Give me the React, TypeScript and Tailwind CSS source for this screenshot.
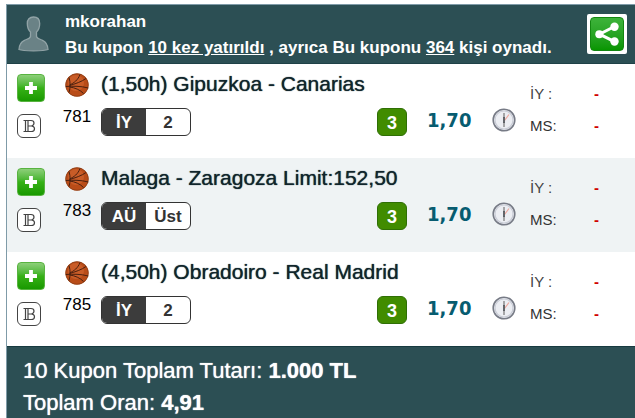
import React from "react";

interface Match {
  code: number;
  title: string;
  market: string;
  pick: string;
  minimum: number;
  odds: string;
}

const matches: Match[] = [
  { code: 781, title: "(1,50h) Gipuzkoa - Canarias", market: "İY", pick: "2", minimum: 3, odds: "1,70" },
  { code: 783, title: "Malaga - Zaragoza Limit:152,50", market: "AÜ", pick: "Üst", minimum: 3, odds: "1,70" },
  { code: 785, title: "(4,50h) Obradoiro - Real Madrid", market: "İY", pick: "2", minimum: 3, odds: "1,70" },
];

const Avatar: React.FC = () => (
  <svg className="w-8 h-9 shrink-0" viewBox="0 0 32 36" aria-hidden="true">
    <path
      d="M16.500 1c-4 0-6.200 2.600-6.200 6.500 0 3.500 1 6.500 3.200 8.500v4.500c-.5 2-3 2.600-6 3.800C4 25.800 2.300 28 2 33.500c4 1.700 25 1.700 29 0-.3-5.500-2.200-7.700-5.500-9.200-3-1.200-5.500-1.800-6-3.800V16c2.200-2 3.200-5 3.200-8.500C22.700 3.600 20.500 1 16.500 1z"
      fill="#6a8286"
      stroke="#91a3a6"
      strokeWidth="1.300"
    />
  </svg>
);

const ShareIcon: React.FC = () => (
  <svg className="w-8 h-8" viewBox="0 0 32 32" aria-hidden="true">
    <path d="M23.500 8.500 8.500 16.200l15 7.500" fill="none" stroke="#fff" strokeWidth="3" />
    <circle cx="23.500" cy="8.700" r="4.200" fill="#fff" />
    <circle cx="8.300" cy="16.200" r="4" fill="#fff" />
    <circle cx="23.500" cy="23.500" r="4.200" fill="#fff" />
  </svg>
);

const Basketball: React.FC = () => (
  <svg className="w-6 h-6" viewBox="0 0 24 24" aria-hidden="true">
    <circle cx="12" cy="12" r="11.500" fill="#b94c18" />
    <circle cx="11" cy="10" r="8" fill="#c95c27" />
    <g fill="none" stroke="#4a200f" strokeWidth="1">
      <circle cx="12" cy="12" r="11.300" stroke="#8a3d17" strokeWidth="0.800" />
      <path d="M0.800 13.500C8 13 16 13 23.300 15" />
      <path d="M4 4.500c1.500 5 1.500 10 0 15" />
      <path d="M4.500 12C9 10 13 7 15 1.500" />
      <path d="M4.500 12.500C10 11 17 8.500 21 5.500" />
      <path d="M4.500 14c5 .5 11 3 14 6.500" />
    </g>
  </svg>
);

const Clock: React.FC = () => (
  <svg className="w-6 h-6" viewBox="0 0 24 24" aria-hidden="true">
    <circle cx="12" cy="12" r="10.800" fill="#eceef3" stroke="#777b86" strokeWidth="1.600" />
    <circle cx="12" cy="12" r="9" fill="none" stroke="#c9ccd6" strokeWidth="1.200" />
    <path d="m12.500 12.500 4.500-6" stroke="#eda79d" strokeWidth="1.200" />
    <path d="M12 5v5M12 14v5" stroke="#777" strokeWidth="1.200" />
    <path d="M12 9v6" stroke="#55585e" strokeWidth="1.800" />
  </svg>
);

const MatchRow: React.FC<{ match: Match }> = ({ match }) => (
  <li className="flex items-start pl-2.5 pt-2 pb-5 odd:bg-white even:bg-[#eff3f4]">
    <div className="flex flex-col gap-3 w-11 pt-0.5 shrink-0">
      <button
        type="button"
        aria-label="Ekle"
        className="w-7 h-7 rounded-sm border border-[#58b340] bg-linear-to-b from-[#8ccf78] via-[#36b116] to-[#189900] flex items-center justify-center"
      >
        <svg className="w-4 h-4" viewBox="0 0 16 16" aria-hidden="true">
          <path d="M8 2v12M2 8h12" stroke="#fff" strokeWidth="3.800" />
        </svg>
      </button>
      <button
        type="button"
        aria-label="Banko"
        className="w-6 h-6 rounded-md border border-[#444] bg-white flex items-center justify-center"
      >
        <svg className="w-4 h-4" viewBox="0 0 16 16" aria-hidden="true">
          <path
            d="M2.500 2.500h7.500c2 0 3 1 3 2.600S12 7.600 10.500 8c2 .2 3 1.100 3 2.700 0 1.800-1.200 2.800-3.200 2.800H2.500M4.500 2.500v11M7 2.500v11M7 8h4"
            fill="none"
            stroke="#444"
            strokeWidth="1.200"
          />
        </svg>
      </button>
    </div>

    <div className="flex flex-col items-center gap-2 w-8 pt-px shrink-0">
      <Basketball />
      <span className="text-[17px] leading-6 text-black">{match.code}</span>
    </div>

    <div className="flex-1 min-w-0 pl-2">
      <h2 className="text-[21px] leading-6 whitespace-nowrap text-[#10252b] text-shadow-[0_0_1px_#10252b]">
        {match.title}
      </h2>
      <div className="flex items-center mt-3">
        <div className="flex h-7 w-[90px] rounded-md border border-[#333] bg-white overflow-hidden text-[17px] leading-7 font-bold text-center">
          <span className="flex-1 bg-[#3c3c3c] text-white">{match.market}</span>
          <span className="flex-1 text-[#333]">{match.pick}</span>
        </div>
      </div>
    </div>

    <div className="flex items-start pt-9 shrink-0">
      <span className="w-[30px] h-7 rounded-md border border-[#2f6f05] bg-[#418c00] text-white text-lg leading-7 font-bold text-center">
        {match.minimum}
      </span>
      <span className="w-[85px] pl-5 text-xl leading-6 font-bold text-[#075c70] font-['DejaVu_Sans_Condensed','DejaVu_Sans',sans-serif]">
        {match.odds}
      </span>
      <Clock />
    </div>

    <dl className="grid grid-cols-[64px_1fr] gap-y-2 w-[119px] pl-3.5 pt-2.5 shrink-0 text-[15px] leading-6">
      <dt className="text-[#444]">İY :</dt>
      <dd className="font-bold text-[#d00000]">-</dd>
      <dt className="text-[#333]">MS:</dt>
      <dd className="font-bold text-[#d00000]">-</dd>
    </dl>
  </li>
);

const App: React.FC = () => {
  return (
    <div className="bg-white pt-1 pl-1.5 font-['Liberation_Sans',Arial,sans-serif]">
      <main className="border-l border-t border-[#7f9ba8]">
        <header className="flex items-center h-[59px] pl-2.5 pr-2 bg-[#2c4f54] border-b border-[#1f4147] text-white">
          <Avatar />
          <div className="flex-1 pl-4 pt-0.5 text-[17px] leading-[26px] font-bold whitespace-nowrap">
            <p>mkorahan</p>
            <p>
              Bu kupon{" "}
              <a href="#kupon" className="underline">
                10 kez yatırıldı
              </a>{" "}
              , ayrıca Bu kuponu{" "}
              <a href="#oynayanlar" className="underline">
                364
              </a>{" "}
              kişi oynadı.
            </p>
          </div>
          <button
            type="button"
            aria-label="Paylaş"
            className="w-10 h-10 rounded-xs bg-white flex items-center justify-center shrink-0"
          >
            <span className="rounded-sm border border-[#138710] bg-linear-to-b from-[#3db33a] to-[#079600]">
              <ShareIcon />
            </span>
          </button>
        </header>

        <ul>
          {matches.map((match) => (
            <MatchRow key={match.code} match={match} />
          ))}
        </ul>

        <footer className="border-t border-[#173a40] bg-[#2c4f54] px-4 pt-2 text-[22px] leading-8 text-white text-shadow-[0_0_1px_#ffffff]">
          <p>
            10 Kupon Toplam Tutarı: <strong>1.000 TL</strong>
          </p>
          <p>
            Toplam Oran: <strong>4,91</strong>
          </p>
        </footer>
      </main>
    </div>
  );
};

export default App;
